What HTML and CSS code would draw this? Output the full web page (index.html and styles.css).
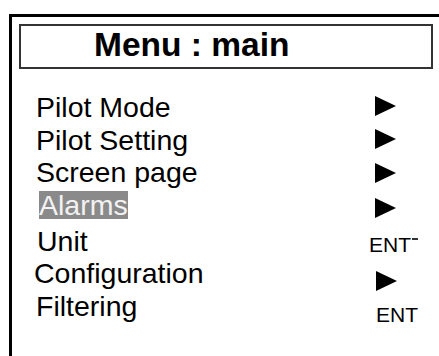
FILE: index.html
```html
<!DOCTYPE html>
<html lang="en">
<head>
<meta charset="utf-8">
<title>Menu : main</title>
<link rel="stylesheet" href="styles.css">
</head>
<body>
<div class="frame">
  <div class="title-box"><h1 class="title">Menu : main</h1></div>
  <ul class="menu">
    <li class="row">
      <span class="label">Pilot Mode</span>
      <svg class="mark arrow" width="21" height="20" viewBox="0 0 21 20"><polygon points="0,0 21,10 0,20"/></svg>
    </li>
    <li class="row">
      <span class="label">Pilot Setting</span>
      <svg class="mark arrow" width="21" height="20" viewBox="0 0 21 20"><polygon points="0,0 21,10 0,20"/></svg>
    </li>
    <li class="row">
      <span class="label">Screen page</span>
      <svg class="mark arrow mark--m7" width="21" height="20" viewBox="0 0 21 20"><polygon points="0,0 21,10 0,20"/></svg>
    </li>
    <li class="row row--selected">
      <span class="label label--selected">Alarms</span>
      <svg class="mark arrow mark--m9" width="21" height="20" viewBox="0 0 21 20"><polygon points="0,0 21,10 0,20"/></svg>
    </li>
    <li class="row">
      <span class="label label--unit">Unit</span>
      <span class="mark ent ent--cut mark--m9">ENT</span>
    </li>
    <li class="row">
      <span class="label label--config">Configuration</span>
      <svg class="mark arrow arrow--right mark--m14" width="21" height="20" viewBox="0 0 21 20"><polygon points="0,0 21,10 0,20"/></svg>
    </li>
    <li class="row">
      <span class="label">Filtering</span>
      <span class="mark ent ent--right mark--m14">ENT</span>
    </li>
  </ul>
</div>
</body>
</html>
```

FILE: styles.css
```css
* {
  box-sizing: border-box;
}

html, body {
  margin: 0;
  padding: 0;
  background: #fff;
  overflow: hidden;
}

body {
  font-family: "Liberation Sans", Arial, sans-serif;
  color: #000;
  height: 356px;
}

.frame {
  margin: 14px 0 0 9px;
  border-left: 3px solid #000;
  border-top: 3px solid #000;
  height: 342px;
  padding: 7px 0 0 7px;
  overflow: hidden;
}

.title-box {
  width: 414px;
  height: 45px;
  border: 2px solid #333;
  padding: 0 0 0 73px;
}

.title {
  margin: 0;
  font-size: 33.5px;
  font-weight: bold;
  line-height: 37px;
}

.menu {
  list-style: none;
  margin: 22px 0 0 -7px;
  padding: 0;
}

.row {
  display: grid;
  grid-template-columns: 333px auto;
  align-items: start;
  justify-items: start;
  height: 32.5px;
  padding-left: 24px;
}

.row--selected {
  height: 36px;
  padding-top: 2px;
}

.label {
  font-size: 28.5px;
  line-height: 32px;
  white-space: nowrap;
}

.label--selected {
  display: inline-block;
  margin-left: 3px;
  line-height: 28px;
  background: #8a8a8a;
  color: #f2f2f2;
}

.label--unit {
  margin-left: 1px;
}

.label--config {
  margin-left: -2px;
}

.mark {
  margin-top: 5px;
}

.arrow {
  display: block;
  margin-left: 6px;
  fill: #000;
}

.arrow--right {
  margin-left: 7px;
}

.mark--m7 {
  margin-top: 7px;
}

.mark--m9 {
  margin-top: 9px;
}

.row--selected .mark--m9 {
  margin-top: 7px;
}

.mark--m14 {
  margin-top: 14px;
}

.ent {
  font-size: 21px;
  line-height: 21px;
  white-space: nowrap;
}

.ent--cut {
  position: relative;
}

.ent--cut::after {
  content: "";
  position: absolute;
  top: 4px;
  right: -7px;
  width: 6px;
  height: 2px;
  background: #333;
}

.ent--right {
  margin-left: 7px;
}
```
